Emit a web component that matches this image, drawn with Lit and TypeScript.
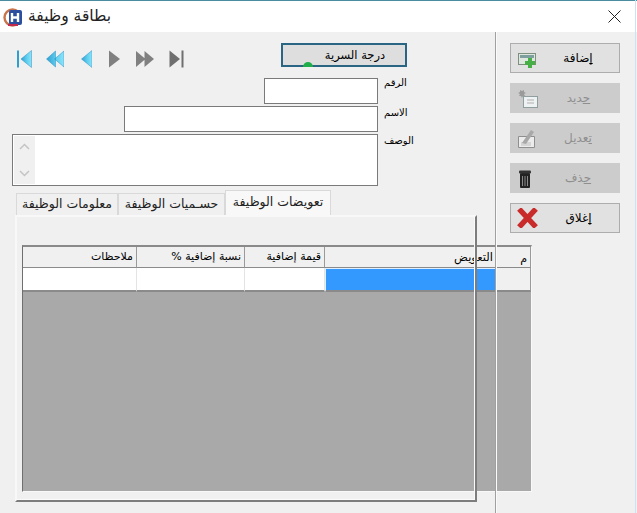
import { LitElement, html, css, svg } from "lit";
import { customElement } from "lit/decorators.js";

const blue = (id: string) => svg`<linearGradient id=${id} x1="0" y1="0" x2="1" y2="0"><stop offset="0" stop-color="#2f9fd0"/><stop offset="0.6" stop-color="#62d2f2"/><stop offset="1" stop-color="#8fe2f7"/></linearGradient>`;

@customElement("app-root")
export class AppRoot extends LitElement {
  static styles = css`
    :host {
      display: block;
      position: relative;
      width: 637px;
      height: 513px;
      overflow: hidden;
      background: #f0f0f0;
      font-family: "DejaVu Sans", sans-serif;
      color: #111;
    }
    .edge {
      position: absolute;
      top: 0;
      right: 1px;
      bottom: 0;
      width: 1px;
      background: #cfe3ef;
    }
    .title {
      height: 31px;
      border-top: 1px solid #4a8ca0;
      background: #fff;
      display: flex;
      align-items: center;
      padding: 0 16px 0 3px;
      gap: 6px;
    }
    .title .t { font-size: 15.5px; color: #222; flex: 1; direction: rtl; text-align: left; padding-bottom: 1px; }
    .title .logo { flex: none; margin-top: 1px; }
    .title .close { flex: none; }
    .body {
      display: grid;
      grid-template-columns: 495px 2px 1fr;
      height: 481px;
    }
    .main { padding: 11px 0 0 12px; min-width: 0; position: relative; }
    .divider {
      background: #a0a0a0;
      border-right: 1px solid #fbfbfb;
      box-sizing: border-box;
      position: relative;
      z-index: 3;
    }
    .side { display: flex; flex-direction: column; gap: 10px; padding: 11px 0 0 13px; }
    .cmd {
      width: 110px;
      height: 30px;
      box-sizing: border-box;
      background: #e1e1e1;
      border: 1px solid #adadad;
      display: flex;
      align-items: center;
      padding-left: 6px;
      font-size: 12px;
      color: #000;
    }
    .cmd.off { background: #cccccc; border-color: #cccccc; color: #8f8f8f; }
    .cmd svg { flex: none; }
    .cmd .lbl { flex: 1; text-align: center; direction: rtl; padding-bottom: 1px; }
    .cmd u { text-decoration-skip-ink: none; }
    .top {
      display: flex;
      height: 24px;
      align-items: flex-start;
    }
    .nav { display: flex; align-items: flex-start; margin-top: 7px; margin-left: 5px; width: 264px; }
    .nav svg { flex: none; display: block; }
    .m14 { margin-right: 14px; }
    .m15 { margin-right: 15px; }
    .m16 { margin-right: 16px; }
    .m17 { margin-right: 17px; }
    .secret {
      width: 126px;
      height: 24px;
      box-sizing: border-box;
      border: 2px solid #2b6584;
      background: #dedede;
      font-size: 11.5px;
      text-align: center;
      line-height: 20px;
      direction: rtl;
      color: #000;
      padding-left: 22px;
      position: relative;
    }
    .dot {
      position: absolute;
      left: 20px;
      bottom: -2px;
      width: 10px;
      height: 5px;
      border-radius: 5px 5px 0 0;
      background: #1fae4a;
    }
    .fields { display: flex; flex-direction: column; gap: 2px; margin-top: 11px; width: 402px; }
    .field { display: flex; justify-content: flex-end; align-items: flex-start; }
    .field label {
      width: 36px;
      flex: none;
      padding-left: 6px;
      box-sizing: border-box;
      font-size: 10px;
      direction: rtl;
      text-align: left;
      line-height: 14px;
      color: #000;
    }
    .field label.up { margin-top: -2px; }
    .box { box-sizing: border-box; background: #fff; border: 1px solid #7a7a7a; height: 26px; }
    .w1 { width: 114px; }
    .w2 { width: 254px; }
    .memo { width: 366px; height: 52px; display: flex; padding: 1px; }
    .sb {
      width: 21px;
      background: #f0f0f0;
      display: flex;
      flex-direction: column;
      justify-content: space-between;
      align-items: center;
      padding: 7px 0 7px;
      box-sizing: border-box;
    }
    .tabs { display: flex; height: 25px; margin: 4px 0 0 4px; align-items: flex-end; }
    .tab {
      box-sizing: border-box;
      height: 22px;
      background: #f0f0f0;
      border: 1px solid #d9d9d9;
      border-bottom: none;
      font-size: 12.5px;
      color: #222;
      text-align: center;
      direction: rtl;
      line-height: 19px;
      white-space: nowrap;
    }
    .tab.t1 { width: 102px; }
    .tab.t2 { width: 107px; }
    .tab.on { width: 106px; height: 25px; background: #f8f8f8; line-height: 21px; }
    .panel {
      margin-left: 3px;
      box-sizing: border-box;
      width: 462px;
      height: 287px;
      padding: 30px 0 0 7px;
      position: relative;
    }
    .frame {
      position: absolute;
      left: 0;
      top: 0;
      width: 462px;
      height: 287px;
      box-sizing: border-box;
      border-top: 2px solid #f8f8f8;
      border-left: 2px solid #f8f8f8;
      border-right: 2px solid #7d7d7d;
      border-bottom: 2px solid #7d7d7d;
      box-shadow: inset -1px -1px 0 #fafafa;
      z-index: 2;
      pointer-events: none;
    }
    .grid {
      width: 510px;
      height: 247px;
      box-sizing: border-box;
      background: #a9a9a9;
      border-top: 2px solid #8a8a8a;
      border-left: 1px solid #6f6f6f;
      border-right: 1px solid #f8f8f8;
      border-bottom: 1px solid #f8f8f8;
      display: grid;
      grid-template-columns: 114px 108px 80px 172px 1fr;
      grid-template-rows: 21px 24px;
      align-content: start;
    }
    .h {
      background: #f0f0f0;
      border-right: 1px solid #9a9a9a;
      border-bottom: 1px solid #8a8a8a;
      font-size: 11px;
      color: #000;
      direction: rtl;
      text-align: right;
      padding: 1px 3px 0 0;
      line-height: 18px;
      white-space: nowrap;
      box-sizing: border-box;
    }
    .h.big { font-size: 11.5px; }
    .c {
      background: #fff;
      border-right: 1px solid #e4e4e4;
      border-bottom: 2px solid #8a8a8a;
      box-sizing: border-box;
    }
    .c.sel { background: #3399ff; border: 1px solid #dfefff; border-bottom: 2px solid #8a8a8a; }
    .c.num { background: #f0f0f0; border-right: 1px solid #9a9a9a; }
    .h.last { padding-top: 3px; }
  `;

  render() {
    return html`
      <div class="title">
        <svg class="logo" width="19" height="19" viewBox="0 0 19 19">
          <circle cx="9.5" cy="9.5" r="8" fill="none" stroke="#c9744a" stroke-width="2.4"/>
          <rect x="6" y="2" width="13" height="15" rx="2" fill="#2b4f9e"/>
          <path d="M9 5v9M15 5v9M9 9.5h6" stroke="#fff" stroke-width="2.4"/>
          <path d="M5 17h10" stroke="#c22b4b" stroke-width="2"/>
        </svg>
        <div class="t">بطاقة وظيفة</div>
        <svg class="close" width="13" height="13" viewBox="0 0 13 13"><path d="M0.5 0.5l12 12M12.5 0.5l-12 12" stroke="#222" stroke-width="1"/></svg>
      </div>
      <div class="body">
        <div class="main">
          <div class="top">
            <div class="nav">
              <svg class="m14" width="15" height="18" viewBox="0 0 15 18"><defs>${blue("g1")}</defs><rect x="0" y="0.5" width="2" height="17" fill="#2f9fd0"/><path d="M14.5 0.5V17.5L4 9z" fill="url(#g1)" stroke="#2f8fc0" stroke-width="0.5"/></svg>
              <svg class="m17" width="18" height="18" viewBox="0 0 18 18"><defs>${blue("g2")}</defs><path d="M9.5 1V17L0.5 9zM18 1V17L8.5 9z" fill="url(#g2)" stroke="#2f8fc0" stroke-width="0.5"/></svg>
              <svg class="m17" width="11" height="18" viewBox="0 0 11 18"><defs>${blue("g3")}</defs><path d="M11 0.5V17.5L0.5 9z" fill="url(#g3)" stroke="#2f8fc0" stroke-width="0.5"/></svg>
              <svg class="m16" width="11" height="18" viewBox="0 0 11 18"><path d="M0 0.5V17.5L11 9z" fill="#808080"/></svg>
              <svg class="m15" width="18" height="18" viewBox="0 0 18 18"><path d="M0 1V17L9.5 9zM8.5 1V17L18 9z" fill="#808080"/></svg>
              <svg width="15" height="18" viewBox="0 0 15 18"><path d="M0.5 0.5V17.5L11 9z" fill="#6f6f6f"/><rect x="12.5" y="0.5" width="2" height="17" fill="#6f6f6f"/></svg>
            </div>
            <div class="secret">درجة السرية<span class="dot"></span></div>
          </div>
          <div class="fields">
            <div class="field"><div class="box w1"></div><label class="up">الرقم</label></div>
            <div class="field"><div class="box w2"></div><label>الاسم</label></div>
            <div class="field">
              <div class="box memo">
                <div class="sb">
                  <svg width="11" height="7" viewBox="0 0 11 7"><path d="M1 6l4.5-4.5L10 6" fill="none" stroke="#c4c4c4" stroke-width="1.5"/></svg>
                  <svg width="11" height="7" viewBox="0 0 11 7"><path d="M1 1l4.5 4.5L10 1" fill="none" stroke="#c4c4c4" stroke-width="1.5"/></svg>
                </div>
              </div>
              <label>الوصف</label>
            </div>
          </div>
          <div class="tabs">
            <div class="tab t1">معلومات الوظيفة</div>
            <div class="tab t2">حسـميات الوظيفة</div>
            <div class="tab on">تعويضات الوظيفة</div>
          </div>
          <div class="panel">
            <div class="grid">
              <div class="h">ملاحظات</div>
              <div class="h">نسبة إضافية %</div>
              <div class="h">قيمة إضافية</div>
              <div class="h big">التعويض</div>
              <div class="h last">م</div>
              <div class="c"></div>
              <div class="c"></div>
              <div class="c"></div>
              <div class="c sel"></div>
              <div class="c num"></div>
            </div>
            <div class="frame"></div>
          </div>
        </div>
        <div class="divider"></div>
        <div class="side">
          <div class="cmd">
            <svg width="20" height="20" viewBox="0 0 20 20"><rect x="1.5" y="5.5" width="17" height="11" fill="#dfe8df" stroke="#7f8f7f"/><rect x="3" y="7" width="14" height="3" fill="#7f9f9f"/><path d="M13 10v10M8 15h10" stroke="#46b046" stroke-width="4"/></svg>
            <span class="lbl"><u>إ</u>ضافة</span>
          </div>
          <div class="cmd off">
            <svg width="21" height="20" viewBox="0 0 21 20"><rect x="6.500" y="8.500" width="14" height="11" fill="#eef2f2" stroke="#8f9f9f"/><path d="M10 12h7M10 15h7" stroke="#b0b0b0"/><path d="M4 0l1 2 2-1 0 2 2 1-2 1 1 2-2 0-1 2-1-2-2 0 1-2-2-1 2-1 0-2 2 1z" fill="#9a9a9a" transform="translate(0 1)"/></svg>
            <span class="lbl"><u>ج</u>ديد</span>
          </div>
          <div class="cmd off">
            <svg width="20" height="20" viewBox="0 0 20 20"><path d="M1.5 8.5h16v11h-16z" fill="#ececec" stroke="#8f8f8f"/><path d="M4 15h10M4 17h10" stroke="#bdbdbd"/><path d="M5 15l9-13 3 2-8 12z" fill="#a8a8a8"/></svg>
            <span class="lbl"><u>ت</u>عديل</span>
          </div>
          <div class="cmd off">
            <svg width="20" height="20" viewBox="0 0 20 20"><rect x="3" y="5" width="10" height="15" rx="1" fill="#222"/><rect x="2" y="2.5" width="12" height="3" rx="1" fill="#333"/><path d="M5.5 8v10M8 8v10M10.5 8v10" stroke="#8a8a8a"/></svg>
            <span class="lbl"><u>ح</u>ذف</span>
          </div>
          <div class="cmd">
            <svg width="21" height="20" viewBox="0 0 21 20"><path d="M4 3L17 17M17 3L4 17" stroke="#c92a2a" stroke-width="5.5" stroke-linecap="square"/></svg>
            <span class="lbl"><u>إ</u>غلاق</span>
          </div>
        </div>
      </div>
      <div class="edge"></div>
    `;
  }
}
